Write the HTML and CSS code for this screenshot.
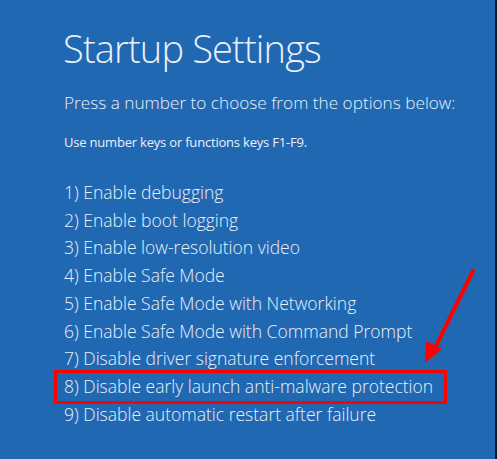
FILE: index.html
```html
<!DOCTYPE html>
<html lang="en">
<head>
  <meta charset="UTF-8" />
  <meta name="viewport" content="width=device-width, initial-scale=1.0" />
  <title>Startup Settings</title>
  <link rel="stylesheet" href="styles.css">
</head>
<body>
  <div class="screen">
    <h1 class="title">Startup Settings</h1>
    <p class="lead">Press a number to choose from the options below:</p>
    <p class="hint">Use number keys or functions keys F1-F9.</p>

    <ul class="options">
      <li>1) Enable debugging</li>
      <li>2) Enable boot logging</li>
      <li>3) Enable low-resolution video</li>
      <li>4) Enable Safe Mode</li>
      <li>5) Enable Safe Mode with Networking</li>
      <li>6) Enable Safe Mode with Command Prompt</li>
      <li>7) Disable driver signature enforcement</li>
      <li class="marked">8) Disable early launch anti-malware protection</li>
      <li>9) Disable automatic restart after failure</li>
    </ul>

    <!-- red arrow pointing at option 8 -->
    <svg class="arrow" width="70" height="110" viewBox="0 0 70 110">
      <line x1="61" y1="7" x2="22" y2="86" stroke="#ff0000" stroke-width="4" stroke-linecap="round" />
      <polygon points="13,99 14,77 30,85" fill="#ff0000" />
    </svg>
  </div>
</body>
</html>
```

FILE: styles.css
```css
html, body {
  margin: 0;
  height: 100%;
}
body {
  background-color: #2168b2;
  font-family: 'Open Sans', 'Noto Sans', sans-serif;
  color: #eaf0f8;
}
.screen {
  position: relative;
  height: 100%;
  box-sizing: border-box;
  padding: 24px 0 0 63px;
  border-right: 2px solid #0d1b2b;
}
.title {
  margin: 0;
  font-size: 38px;
  font-weight: 300;
  line-height: 48px;
  letter-spacing: -0.85px;
}
.lead {
  margin: 19px 0 0 1px;
  font-size: 17.2px;
  font-weight: 300;
  line-height: 24px;
  white-space: nowrap;
}
.hint {
  margin: 17px 0 0 1px;
  font-size: 13px;
  line-height: 20px;
  letter-spacing: -0.2px;
}
.options {
  list-style: none;
  margin: 27px 0 0 1px;
  padding: 0;
  font-size: 17.5px;
  font-weight: 300;
  line-height: 27.7px;
}
.options li {
  white-space: nowrap;
}
.options .marked {
  width: fit-content;
  margin: -3px 0 -3px -10px;
  padding: 0 11px 0 7px;
  border: 3px solid #ff0000;
}
.arrow {
  position: absolute;
  left: 412px;
  top: 264px;
}
```
